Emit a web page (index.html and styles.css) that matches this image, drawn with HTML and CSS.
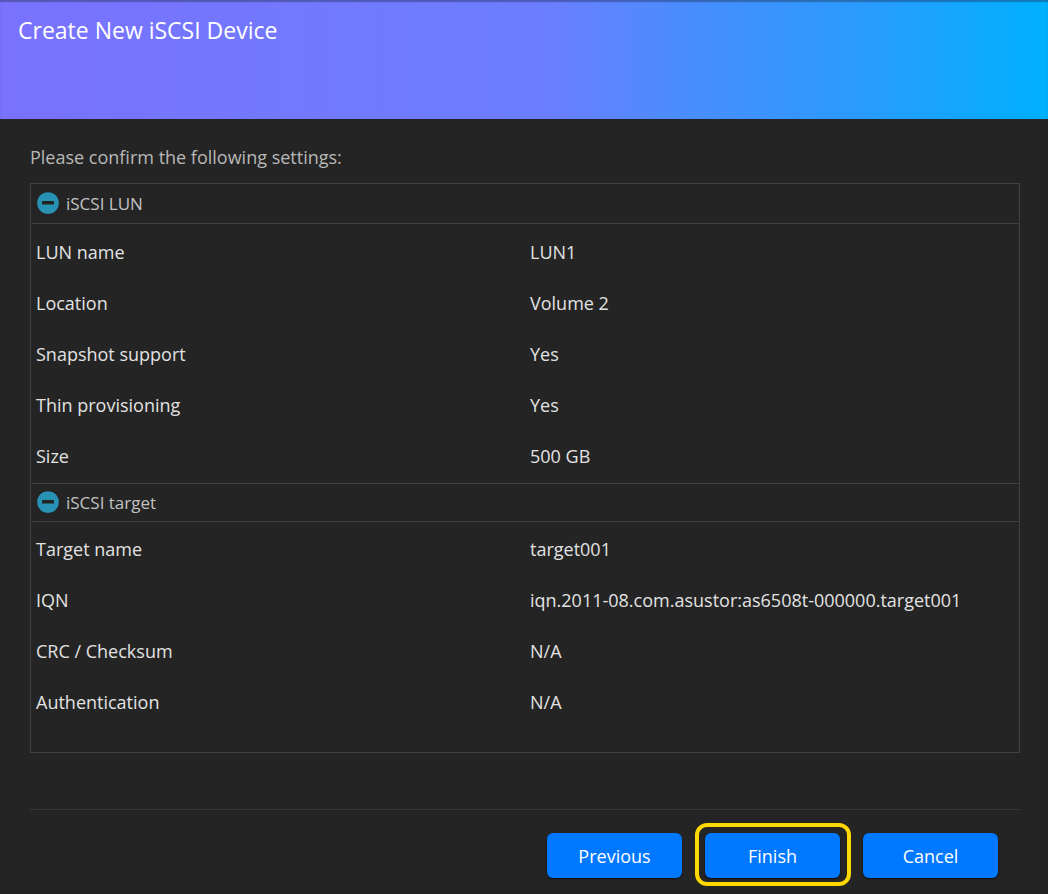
FILE: index.html
```html
<!DOCTYPE html>
<html lang="en">
<head>
<meta charset="utf-8">
<meta name="viewport" content="width=device-width, initial-scale=1">
<title>Create New iSCSI Device</title>
<link rel="stylesheet" href="styles.css">
</head>
<body>
<main class="wizard">
  <header class="wizard-header">
    <h1 class="wizard-title">Create New iSCSI Device</h1>
  </header>
  <div class="wizard-body">
    <p class="intro">Please confirm the following settings:</p>
    <div class="summary">
      <section class="group">
        <h2 class="group-title">
          <button class="toggle" type="button" aria-expanded="true">
            <svg class="toggle-icon" viewBox="0 0 22 22" aria-hidden="true"><circle cx="11" cy="11" r="10.8" fill="#2892b5"/><rect x="5" y="9" width="12" height="3.6" rx=".6" fill="#242424"/></svg>
            <span class="toggle-label">iSCSI LUN</span>
          </button>
        </h2>
        <table class="settings">
          <tbody>
            <tr><th scope="row">LUN name</th><td>LUN1</td></tr>
            <tr><th scope="row">Location</th><td>Volume 2</td></tr>
            <tr><th scope="row">Snapshot support</th><td>Yes</td></tr>
            <tr><th scope="row">Thin provisioning</th><td>Yes</td></tr>
            <tr><th scope="row">Size</th><td>500 GB</td></tr>
          </tbody>
        </table>
      </section>
      <section class="group">
        <h2 class="group-title">
          <button class="toggle" type="button" aria-expanded="true">
            <svg class="toggle-icon" viewBox="0 0 22 22" aria-hidden="true"><circle cx="11" cy="11" r="10.8" fill="#2892b5"/><rect x="5" y="9" width="12" height="3.6" rx=".6" fill="#242424"/></svg>
            <span class="toggle-label">iSCSI target</span>
          </button>
        </h2>
        <table class="settings">
          <tbody>
            <tr><th scope="row">Target name</th><td>target001</td></tr>
            <tr><th scope="row">IQN</th><td>iqn.2011-08.com.asustor:as6508t-000000.target001</td></tr>
            <tr><th scope="row">CRC / Checksum</th><td>N/A</td></tr>
            <tr><th scope="row">Authentication</th><td>N/A</td></tr>
          </tbody>
        </table>
      </section>
    </div>
    <footer class="actions">
      <button class="btn" type="button">Previous</button>
      <button class="btn btn-highlight" type="button">Finish</button>
      <button class="btn" type="button">Cancel</button>
    </footer>
  </div>
</main>
</body>
</html>
```

FILE: styles.css
```css
* {
  box-sizing: border-box;
}

body {
  margin: 0;
  background: #242424;
  color: #e2e2e2;
  font-family: "Segoe UI", "Open Sans", "Noto Sans", sans-serif;
  font-size: 18px;
  font-weight: 500;
  line-height: 27px;
}

.wizard-header {
  min-height: 119px;
  padding: 14px 18px;
  background: linear-gradient(90deg, #7a72ff 0%, #6b7dff 52%, #4a8cff 65%, #2a9bff 82%, #00b0ff 100%);
  box-shadow: inset 0 2px 1px rgba(30, 40, 70, 0.4);
}

.wizard-title {
  margin: 0;
  color: #fff;
  font-size: 23px;
  font-weight: 400;
  line-height: 32px;
}

.wizard-body {
  padding: 25px 28px 16px 30px;
}

.intro {
  margin: 0 0 12px;
  color: #b8b8b8;
}

.summary {
  padding-bottom: 23px;
  border: 1px solid #404040;
}

.group-title {
  margin: 0 0 0 1px;
  border-bottom: 1px solid #404040;
  font-size: 17px;
  font-weight: 400;
  line-height: 39px;
}

.group + .group .group-title {
  border-top: 1px solid #404040;
  line-height: 37px;
}

.toggle {
  display: flex;
  align-items: center;
  gap: 7px;
  width: 100%;
  padding: 0 5px;
  border: 0;
  background: none;
  color: #c2c2c2;
  font: inherit;
  text-align: left;
  cursor: pointer;
}

.toggle-icon {
  width: 22px;
  height: 22px;
  margin-bottom: 2px;
}

.settings {
  width: 100%;
  margin: 3px 0 1px;
  border-collapse: collapse;
  table-layout: fixed;
}

.group + .group .settings {
  margin-top: 2px;
}

.settings th,
.settings td {
  width: 50%;
  height: 51px;
  padding: 0 5px;
  font-weight: 500;
  text-align: left;
  vertical-align: middle;
}

.actions {
  display: flex;
  justify-content: flex-end;
  gap: 23px;
  margin-top: 56px;
  padding: 23px 22px 0 0;
  border-top: 1px solid #363636;
}

.btn {
  position: relative;
  width: 135px;
  height: 45px;
  padding: 2px 0 0;
  border: 0;
  border-radius: 6px;
  background: #0078ff;
  box-shadow: 0 1px 2px rgba(0, 0, 0, 0.6);
  color: #fff;
  font: inherit;
  cursor: pointer;
}

.btn-highlight::after {
  content: "";
  position: absolute;
  inset: -10px -11px -8px -10px;
  border: 4px solid #ffd800;
  border-radius: 12px;
}
```
